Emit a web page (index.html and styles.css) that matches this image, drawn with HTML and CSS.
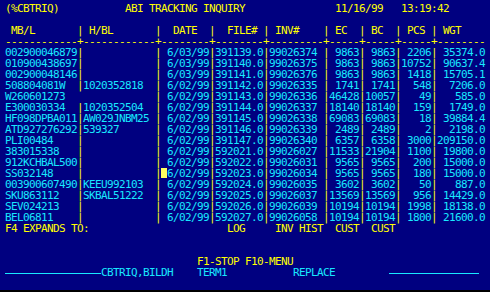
FILE: index.html
```html
<!DOCTYPE html>
<html>
<head>
<meta charset="utf-8">
<title>ABI TRACKING INQUIRY</title>
<link rel="stylesheet" href="styles.css">
</head>
<body>
<div class="screen">
<div class="row">(%CBTRIQ)           ABI TRACKING INQUIRY               11/16/99   13:19:42</div>
<div class="row"></div>
<div class="row"> MB/L       | H/BL       |  DATE  |  FILE# | INV#    | EC  | BC  | PCS | WGT</div>
<div class="row">------------+------------+--------+--------+---------+-----+-----+-----+--------</div>
<div class="row c">002900046879<span class="y">|</span>            <span class="y">|</span> 6/03/99<span class="y">|</span>391139.0<span class="y">|</span>99026374 <span class="y">|</span> 9863<span class="y">|</span> 9863<span class="y">|</span> 2206<span class="y">|</span> 35374.0</div>
<div class="row c">010900438697<span class="y">|</span>            <span class="y">|</span> 6/03/99<span class="y">|</span>391140.0<span class="y">|</span>99026375 <span class="y">|</span> 9863<span class="y">|</span> 9863<span class="y">|</span>10752<span class="y">|</span> 90637.4</div>
<div class="row c">002900048146<span class="y">|</span>            <span class="y">|</span> 6/03/99<span class="y">|</span>391141.0<span class="y">|</span>99026376 <span class="y">|</span> 9863<span class="y">|</span> 9863<span class="y">|</span> 1418<span class="y">|</span> 15705.1</div>
<div class="row c">508804081W  <span class="y">|</span>1020352818  <span class="y">|</span> 6/02/99<span class="y">|</span>391142.0<span class="y">|</span>99026335 <span class="y">|</span> 1741<span class="y">|</span> 1741<span class="y">|</span>  548<span class="y">|</span>  7206.0</div>
<div class="row c">W260601273               <span class="y">|</span> 6/02/99<span class="y">|</span>391143.0<span class="y">|</span>99026336 <span class="y">|</span>46428<span class="y">|</span>10057<span class="y">|</span>   49<span class="y">|</span>   585.0</div>
<div class="row c">E300030334  <span class="y">|</span>1020352504  <span class="y">|</span> 6/02/99<span class="y">|</span>391144.0<span class="y">|</span>99026337 <span class="y">|</span>18140<span class="y">|</span>18140<span class="y">|</span>  159<span class="y">|</span>  1749.0</div>
<div class="row c">HF098DPBA011<span class="y">|</span>AW029JNBM25 <span class="y">|</span> 6/02/99<span class="y">|</span>391145.0<span class="y">|</span>99026338 <span class="y">|</span>69083<span class="y">|</span>69083<span class="y">|</span>   18<span class="y">|</span> 39884.4</div>
<div class="row c">ATD927276292<span class="y">|</span>539327      <span class="y">|</span> 6/02/99<span class="y">|</span>391146.0<span class="y">|</span>99026339 <span class="y">|</span> 2489<span class="y">|</span> 2489<span class="y">|</span>    2<span class="y">|</span>  2198.0</div>
<div class="row c">PLI00484    <span class="y">|</span>            <span class="y">|</span> 6/02/99<span class="y">|</span>391147.0<span class="y">|</span>99026340 <span class="y">|</span> 6357<span class="y">|</span> 6358<span class="y">|</span> 3000<span class="y">|</span>209150.0</div>
<div class="row c">383015338   <span class="y">|</span>            <span class="y">|</span> 6/02/99<span class="y">|</span>592021.0<span class="y">|</span>99026027 <span class="y">|</span>11533<span class="y">|</span>21904<span class="y">|</span> 1100<span class="y">|</span> 19800.0</div>
<div class="row c">912KCHBAL500<span class="y">|</span>            <span class="y">|</span> 6/02/99<span class="y">|</span>592022.0<span class="y">|</span>99026031 <span class="y">|</span> 9565<span class="y">|</span> 9565<span class="y">|</span>  200<span class="y">|</span> 15000.0</div>
<div class="row c">SS032148    <span class="y">|</span>            <span class="y">|</span><span class="cursor"></span>6/02/99<span class="y">|</span>592023.0<span class="y">|</span>99026034 <span class="y">|</span> 9565<span class="y">|</span> 9565<span class="y">|</span>  180<span class="y">|</span> 15000.0</div>
<div class="row c">003900607490<span class="y">|</span>KEEU992103  <span class="y">|</span> 6/02/99<span class="y">|</span>592024.0<span class="y">|</span>99026035 <span class="y">|</span> 3602<span class="y">|</span> 3602<span class="y">|</span>   50<span class="y">|</span>   887.0</div>
<div class="row c">SKU863112   <span class="y">|</span>SKBAL51222  <span class="y">|</span> 6/02/99<span class="y">|</span>592025.0<span class="y">|</span>99026037 <span class="y">|</span>13569<span class="y">|</span>13569<span class="y">|</span>  956<span class="y">|</span> 14429.0</div>
<div class="row c">SEV024213   <span class="y">|</span>            <span class="y">|</span> 6/02/99<span class="y">|</span>592026.0<span class="y">|</span>99026039 <span class="y">|</span>10194<span class="y">|</span>10194<span class="y">|</span> 1998<span class="y">|</span> 18138.0</div>
<div class="row c">BEL06811    <span class="y">|</span>            <span class="y">|</span> 6/02/99<span class="y">|</span>592027.0<span class="y">|</span>99026058 <span class="y">|</span>10194<span class="y">|</span>10194<span class="y">|</span> 1800<span class="y">|</span> 21600.0</div>
<div class="row">F4 EXPANDS TO:                       LOG     INV HIST  CUST  CUST</div>
<div class="row"></div>
<div class="row"></div>
<div class="row">                                F1-STOP F10-MENU</div>
<div class="row c"><span class="rule">                </span>CBTRIQ,BILDH    TERM1           REPLACE         <span class="rule">               </span></div>
</div>
</body>
</html>
```
FILE: styles.css
```css
html, body {
  margin: 0;
  padding: 0;
  background: #000080;
}

body {
  width: 490px;
  height: 292px;
  overflow: hidden;
}

.screen {
  box-sizing: border-box;
  width: 490px;
  height: 292px;
  padding: 3px 0 0 5px;
  border-bottom: 2px solid #000000;
  font-family: "DejaVu Sans Mono", monospace;
  font-size: 11px;
  letter-spacing: -0.6226px;
  line-height: 11px;
  color: #ffff00;
}

.row {
  height: 11px;
  white-space: pre;
}

.c {
  color: #18e8ff;
}

.y {
  color: #ffff00;
}

.cursor {
  display: inline-block;
  width: 6px;
  height: 10px;
  vertical-align: top;
  background: #ffff60;
}

.rule {
  background: linear-gradient(#18e8ff, #18e8ff) no-repeat 0 56% / 100% 1px;
}
```
